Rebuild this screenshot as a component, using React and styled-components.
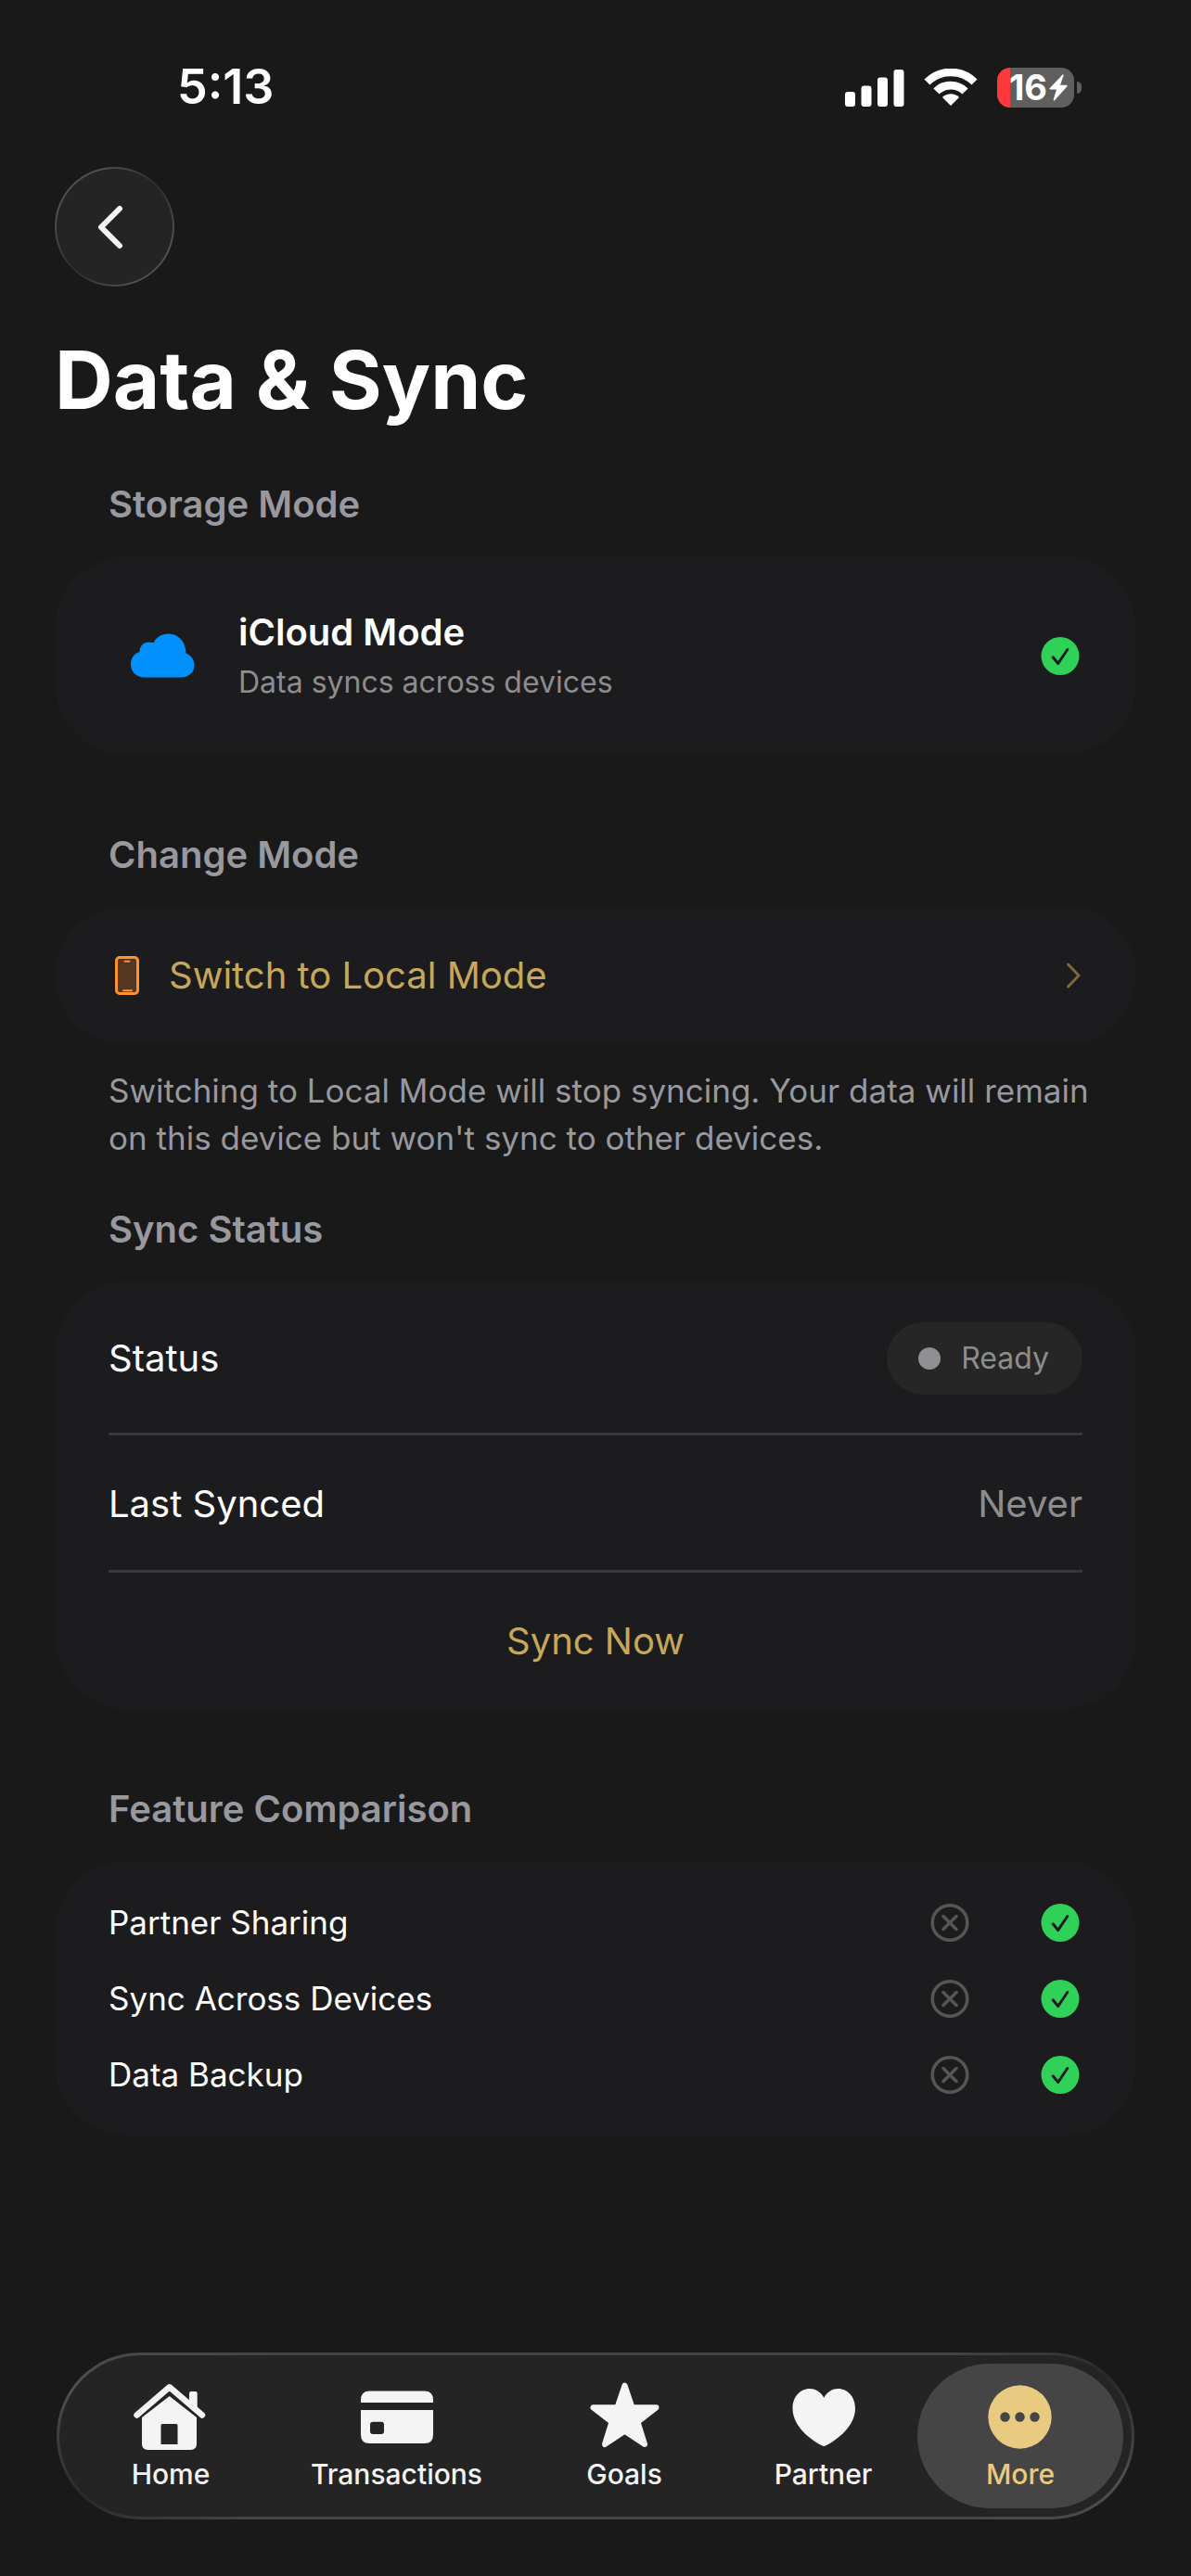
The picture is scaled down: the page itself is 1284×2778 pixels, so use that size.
import React from 'react';
import styled, { createGlobalStyle } from 'styled-components';

const GlobalStyle = createGlobalStyle`
  * {
    box-sizing: border-box;
  }
  body {
    margin: 0;
    background: #191919;
    color: #fff;
    font-family: Inter, "Liberation Sans", sans-serif;
    font-size: 40px;
    line-height: 52px;
  }
  button {
    font: inherit;
    border: none;
    cursor: pointer;
  }
  svg {
    display: block;
    flex-shrink: 0;
  }
`;

const Page = styled.div`
  display: flex;
  flex-direction: column;
  min-height: 100vh;
  padding: 0 59px 61px;
`;

const StatusBar = styled.div`
  display: flex;
  justify-content: space-between;
  align-items: center;
  height: 180px;
  padding: 8px 59px 0 132px;
`;

const Clock = styled.span`
  font-size: 52px;
  font-weight: 600;
  line-height: 60px;
`;

const Indicators = styled.div`
  display: flex;
  align-items: center;
`;

const Battery = styled.div`
  display: flex;
  align-items: center;
  justify-content: flex-end;
  gap: 2px;
  width: 83px;
  height: 43px;
  margin-right: 3px;
  padding-right: 7px;
  border-radius: 14px;
  background: linear-gradient(90deg, #ff383c 14px, #5f5f5f 14px);
  font-size: 38px;
  font-weight: 700;
  line-height: 43px;
`;

const BatteryNub = styled.div`
  width: 5px;
  height: 13px;
  border-radius: 0 6px 6px 0;
  background: #5f5f5f;
`;

const BackButton = styled.button`
  display: flex;
  align-items: center;
  justify-content: center;
  width: 129px;
  height: 129px;
  padding: 0 10px 0 0;
  border: 2px solid transparent;
  border-radius: 50%;
  background:
    linear-gradient(#242424, #242424) padding-box,
    linear-gradient(135deg, #505050 20%, #2c2c2c 50%, #505050 80%) border-box;
`;

const Title = styled.h1`
  margin: 49px 0 56px;
  font-size: 87px;
  font-weight: 700;
  line-height: 104px;
`;

const Section = styled.section`
  margin-bottom: ${(props) => (props.$tight ? '47px' : '82px')};
`;

const SectionTitle = styled.h2`
  margin: 0 58px 30px;
  font-size: 40px;
  font-weight: 600;
  line-height: 52px;
  color: #98989f;
`;

const Card = styled.div`
  border-radius: 78px;
  background: #1c1c1e;
  padding: 0 58px;
`;

const ModeCard = styled(Card)`
  display: flex;
  align-items: center;
  gap: 24px;
  padding: 56px 58px;
`;

const ModeIcon = styled.div`
  display: flex;
  justify-content: center;
  width: 116px;
`;

const ModeText = styled.div`
  display: flex;
  flex: 1;
  flex-direction: column;
  gap: 6px;
`;

const ModeName = styled.div`
  font-weight: 600;
`;

const ModeDetail = styled.div`
  font-size: 32px;
  line-height: 44px;
  color: #8d8d8e;
`;

const SwitchButton = styled.button`
  display: flex;
  align-items: center;
  gap: 25px;
  width: 100%;
  padding: 48px 58px;
  border-radius: 78px;
  background: #1c1c1e;
  color: #c6a85a;
  text-align: left;
`;

const SwitchLabel = styled.span`
  flex: 1;
`;

const Footnote = styled.p`
  margin: 25px 40px 0 58px;
  font-size: 35px;
  line-height: 51px;
  color: #98989f;
`;

const Row = styled.div`
  display: flex;
  align-items: center;
  justify-content: space-between;
  padding: ${(props) => (props.$tall ? '44px 0 41px' : '48px 0 45px')};
  border-bottom: 3px solid #38383a;
`;

const RowValue = styled.span`
  color: #8d8d8e;
`;

const StatusPill = styled.span`
  display: flex;
  align-items: center;
  gap: 22px;
  height: 78px;
  padding: 0 36px 0 34px;
  border-radius: 39px;
  background: #262626;
  color: #8d8d8e;
  font-size: 32px;
`;

const StatusDot = styled.span`
  width: 24px;
  height: 24px;
  border-radius: 50%;
  background: #8e8e93;
`;

const SyncButton = styled.button`
  display: block;
  width: 100%;
  padding: 48px 0 47px;
  background: none;
  color: #c6a85a;
  text-align: center;
`;

const TableCard = styled(Card)`
  padding: 25px 58px;
`;

const FeatureTable = styled.table`
  width: 100%;
  border-collapse: collapse;
  font-size: 35px;
`;

const FeatureName = styled.th`
  height: 82px;
  padding: 0;
  font-weight: 400;
  text-align: left;
`;

const FeatureCell = styled.td`
  width: ${(props) => (props.$last ? '48px' : '119px')};
  padding: 0;
`;

const TabBar = styled.nav`
  display: grid;
  grid-template-columns: 222fr 265fr 226fr 203fr 222fr;
  margin: auto 2px 0;
  padding: 9px;
  border: 3px solid transparent;
  border-radius: 90px;
  background:
    linear-gradient(#242424, #242424) padding-box,
    conic-gradient(
      #434343 77deg, #292929 83deg, #4f4f4f 95deg, #434343 105deg,
      #434343 257deg, #292929 263deg, #4f4f4f 275deg, #434343 285deg
    ) border-box;
`;

const Tab = styled.a`
  display: flex;
  flex-direction: column;
  align-items: center;
  gap: 6px;
  padding: 19px 0;
  border-radius: 78px;
  background: ${(props) => (props.$active ? '#454545' : 'transparent')};
  color: ${(props) => (props.$active ? '#e8ca80' : '#f4f4f4')};
  font-size: 30px;
  font-weight: 500;
  line-height: 36px;
  text-decoration: none;
`;

const SignalIcon = () => (
  <svg width="64" height="41" viewBox="0 0 64 41" fill="#fff">
    <rect x="0" y="25" width="11" height="16" rx="3" />
    <rect x="17.500" y="18.500" width="11" height="22.500" rx="3" />
    <rect x="35" y="9.500" width="11" height="31.500" rx="3" />
    <rect x="52.500" y="1" width="11" height="40" rx="3" />
  </svg>
);

const WifiIcon = () => (
  <svg width="100" height="41" viewBox="-21 0 100 41" fill="none" stroke="#fff">
    <path d="M3.500 14.500A36 36 0 0 1 54.500 14.500" strokeWidth="8.500" />
    <path d="M13.500 24.500A22 22 0 0 1 44.500 24.500" strokeWidth="8.800" />
    <path d="M29 40L20 31A12.700 12.700 0 0 1 38 31Z" fill="#fff" stroke="none" />
  </svg>
);

const BoltIcon = () => (
  <svg width="20" height="29" viewBox="0 0 20 29" fill="#fff">
    <path d="M14.500 .5L.6 15.200Q0 16.400 1.400 16.500H8L4.600 27.600Q4.800 29.200 6.200 28L19.400 13.200Q20 12 18.600 11.800H12L15.600 1.400Q15.500 0 14.500 .5Z" />
  </svg>
);

const BackIcon = () => (
  <svg width="28" height="48" viewBox="0 0 28 48" fill="none" stroke="#f6f6f6" strokeWidth="6" strokeLinecap="round" strokeLinejoin="round">
    <path d="M24 4L4 24L24 44" />
  </svg>
);

const CloudIcon = () => (
  <svg width="70" height="48" viewBox="0 0 70 48" fill="#0091ff">
    <path d="M15.500 47.500C6.500 47.500 1 41 1 33.500C1 26.500 5 21.500 10.500 20C10.500 13.500 15 9.500 20.500 9.500C22 9.500 24 9.700 25.500 10.300C28.500 4 34.500 .5 41 .5C52 .5 60.500 9 60.500 21.500C66 23.500 69.500 28.500 69.500 34.500C69.500 42 63.500 47.500 55.500 47.500Z" />
  </svg>
);

const PhoneIcon = () => (
  <svg width="40" height="44" viewBox="0 0 40 44">
    <rect x="8.500" y="2.500" width="23" height="39" rx="3.500" fill="#533721" stroke="#ff9230" strokeWidth="3" />
    <path d="M17.500 6.700H22.500M16 38.300H25" stroke="#ff9230" strokeWidth="2" strokeLinecap="round" />
  </svg>
);

const ChevronIcon = () => (
  <svg width="18" height="30" viewBox="0 0 18 30" fill="none" stroke="#7b683d" strokeWidth="3" strokeLinecap="round" strokeLinejoin="round">
    <path d="M2.500 3L14 15L2.500 27" />
  </svg>
);

const CheckIcon = () => (
  <svg width="48" height="42" viewBox="0 0 48 42" role="img" aria-label="Yes">
    <circle cx="24" cy="21.500" r="20.500" fill="#30d158" />
    <path d="M16.200 22.800L21.700 29.500L31.800 14.500" fill="none" stroke="#1c1c1e" strokeWidth="3" strokeLinecap="round" strokeLinejoin="round" />
  </svg>
);

const CrossIcon = () => (
  <svg width="48" height="42" viewBox="0 0 48 42" fill="none" stroke="#565657" strokeWidth="3.500" strokeLinecap="round" role="img" aria-label="No">
    <circle cx="24" cy="21.500" r="18.800" />
    <path d="M17 14.500L31 28.500M31 14.500L17 28.500" />
  </svg>
);

const HomeIcon = () => (
  <svg width="80" height="76" viewBox="0 0 80 76">
    <path d="M3.500 36.500L38.700 6.300L74 36.500" fill="none" stroke="#f4f4f4" strokeWidth="6.500" strokeLinecap="round" strokeLinejoin="round" />
    <path d="M60 28V13Q60 11 62 11H66.700Q68.700 11 68.700 13V32Z" fill="#f4f4f4" />
    <path
      d="M38.700 16L68 39V67.500Q68 74 61.500 74H15.500Q9 74 9 67.500V39ZM31 46Q29.500 46 29.500 47.500V68H47.500V47.500Q47.500 46 46 46Z"
      fill="#f4f4f4"
      fillRule="evenodd"
    />
  </svg>
);

const CardIcon = () => (
  <svg width="80" height="76" viewBox="0 0 80 76" fill="#f4f4f4" fillRule="evenodd">
    <path d="M1 23V20Q1 10.500 10.500 10.500H69.500Q79 10.500 79 20V23Z" />
    <path d="M1 31H79V57.500Q79 67 69.500 67H10.500Q1 67 1 57.500ZM14 43.700Q11 43.700 11 46.700V54Q11 57 14 57H23Q26 57 26 54V46.700Q26 43.700 23 43.700Z" />
  </svg>
);

const StarIcon = () => (
  <svg width="80" height="76" viewBox="0 0 80 76">
    <path
      d="M40.500 4.500L48.500 28.300H74.500L54.500 44L62 68L40.500 53.800L19 68L26.500 44L6.500 28.300H32.500Z"
      fill="#f4f4f4"
      stroke="#f4f4f4"
      strokeWidth="6"
      strokeLinejoin="round"
    />
  </svg>
);

const HeartIcon = () => (
  <svg width="80" height="76" viewBox="0 0 80 76" fill="#f4f4f4">
    <path d="M40.300 17.700C44 11 50 8 55.500 8C66 8 74 17 74 29C74 45 61 59.500 42.500 69.300Q40.300 70.500 38 69.300C19.500 59.500 6.500 45 6.500 29C6.500 17 14.500 8 25 8C30.500 8 36.500 11 40.300 17.700Z" />
  </svg>
);

const MoreIcon = () => (
  <svg width="80" height="76" viewBox="0 0 80 76" fill="#454545">
    <circle cx="39.500" cy="38.500" r="34.200" fill="#e8ca80" />
    <circle cx="23.500" cy="38.500" r="5.200" />
    <circle cx="39.500" cy="38.500" r="5.200" />
    <circle cx="55.500" cy="38.500" r="5.200" />
  </svg>
);

const features = [
  { name: 'Partner Sharing', local: false, icloud: true },
  { name: 'Sync Across Devices', local: false, icloud: true },
  { name: 'Data Backup', local: false, icloud: true },
];

const tabs = [
  { label: 'Home', icon: <HomeIcon /> },
  { label: 'Transactions', icon: <CardIcon /> },
  { label: 'Goals', icon: <StarIcon /> },
  { label: 'Partner', icon: <HeartIcon /> },
  { label: 'More', icon: <MoreIcon />, active: true },
];

const App = () => {
  return (
    <Page>
      <GlobalStyle />
      <StatusBar>
        <Clock>5:13</Clock>
        <Indicators>
          <SignalIcon />
          <WifiIcon />
          <Battery>
            <span>16</span>
            <BoltIcon />
          </Battery>
          <BatteryNub />
        </Indicators>
      </StatusBar>

      <header>
        <BackButton aria-label="Back">
          <BackIcon />
        </BackButton>
        <Title>Data &amp; Sync</Title>
      </header>

      <Section>
        <SectionTitle>Storage Mode</SectionTitle>
        <ModeCard>
          <ModeIcon>
            <CloudIcon />
          </ModeIcon>
          <ModeText>
            <ModeName>iCloud Mode</ModeName>
            <ModeDetail>Data syncs across devices</ModeDetail>
          </ModeText>
          <CheckIcon />
        </ModeCard>
      </Section>

      <Section $tight>
        <SectionTitle>Change Mode</SectionTitle>
        <SwitchButton>
          <PhoneIcon />
          <SwitchLabel>Switch to Local Mode</SwitchLabel>
          <ChevronIcon />
        </SwitchButton>
        <Footnote>
          Switching to Local Mode will stop syncing. Your data will remain on this device but won't sync to other
          devices.
        </Footnote>
      </Section>

      <Section>
        <SectionTitle>Sync Status</SectionTitle>
        <Card>
          <Row $tall>
            <span>Status</span>
            <StatusPill>
              <StatusDot />
              Ready
            </StatusPill>
          </Row>
          <Row>
            <span>Last Synced</span>
            <RowValue>Never</RowValue>
          </Row>
          <SyncButton>Sync Now</SyncButton>
        </Card>
      </Section>

      <Section>
        <SectionTitle>Feature Comparison</SectionTitle>
        <TableCard>
          <FeatureTable>
            <tbody>
              {features.map((feature) => (
                <tr key={feature.name}>
                  <FeatureName scope="row">{feature.name}</FeatureName>
                  <FeatureCell>{feature.local ? <CheckIcon /> : <CrossIcon />}</FeatureCell>
                  <FeatureCell $last>{feature.icloud ? <CheckIcon /> : <CrossIcon />}</FeatureCell>
                </tr>
              ))}
            </tbody>
          </FeatureTable>
        </TableCard>
      </Section>

      <TabBar>
        {tabs.map((tab) => (
          <Tab key={tab.label} href="#" $active={tab.active} aria-current={tab.active ? 'page' : undefined}>
            {tab.icon}
            {tab.label}
          </Tab>
        ))}
      </TabBar>
    </Page>
  );
};

export default App;
